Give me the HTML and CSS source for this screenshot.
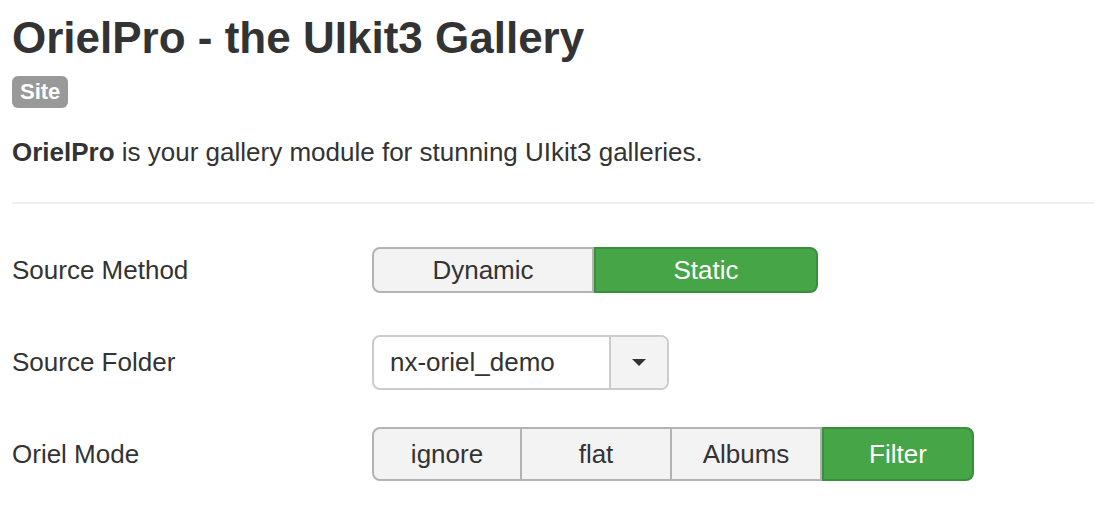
FILE: index.html
```html
<!DOCTYPE html>
<html>
<head>
<meta charset="utf-8">
<link rel="stylesheet" href="styles.css">
</head>
<body>
<div class="page">
  <h1 class="title">OrielPro - the UIkit3 Gallery</h1>
  <span class="badge">Site</span>
  <p class="desc"><strong>OrielPro</strong> is your gallery module for stunning UIkit3 galleries.</p>
  <hr class="sep">
  <div class="form">
    <div class="row">
      <div class="label">Source Method</div>
      <div class="btn-group btn-group-sm">
        <span class="btn btn-wide">Dynamic</span>
        <span class="btn btn-wide active">Static</span>
      </div>
    </div>
    <div class="row">
      <div class="label">Source Folder</div>
      <div class="select">
        <span class="select-value">nx-oriel_demo</span>
        <span class="select-arrow"><span class="caret"></span></span>
      </div>
    </div>
    <div class="row">
      <div class="label">Oriel Mode</div>
      <div class="btn-group">
        <span class="btn">ignore</span>
        <span class="btn">flat</span>
        <span class="btn">Albums</span>
        <span class="btn active">Filter</span>
      </div>
    </div>
  </div>
</div>
</body>
</html>
```

FILE: styles.css
```css
html, body {
  margin: 0;
  padding: 0;
  background: #fff;
}
body {
  font-family: "Liberation Sans", Arial, sans-serif;
  color: #333;
  font-size: 26px;
}
.page {
  padding: 14px 0 0 12px;
}
.title {
  margin: 0;
  font-size: 44px;
  line-height: 48px;
  font-weight: bold;
  color: #333;
}
.badge {
  display: inline-block;
  margin-top: 14px;
  background: #999;
  color: #fff;
  font-weight: bold;
  font-size: 22px;
  line-height: 24px;
  padding: 4px 8px;
  border-radius: 6px;
}
.desc {
  margin: 26px 0 0 0;
  line-height: 36px;
}
.desc strong {
  font-weight: bold;
}
.sep {
  margin: 32px 0 0 0;
  border: 0;
  border-top: 2px solid #eee;
  height: 0;
}
.form {
  margin-top: 38px;
}
.row {
  display: flex;
  align-items: center;
  height: 56px;
  margin-bottom: 36px;
}
.label {
  width: 360px;
  line-height: 36px;
}
.btn-group {
  display: flex;
  height: 54px;
}
.btn-group-sm {
  height: 46px;
}
.btn {
  box-sizing: border-box;
  width: 150px;
  display: flex;
  align-items: center;
  justify-content: center;
  background: #f3f3f3;
  border: 2px solid #b3b3b3;
  border-left-width: 0;
  color: #333;
}
.btn:last-child {
  width: 152px;
}
.btn-wide {
  width: 222px;
}
.btn-wide:last-child {
  width: 224px;
}
.btn:first-child {
  border-left-width: 2px;
  border-radius: 8px 0 0 8px;
}
.btn:last-child {
  border-radius: 0 8px 8px 0;
}
.btn.active {
  background: #46a546;
  border-color: #3b8e3b;
  border-left-width: 2px;
  color: #fff;
}
.select {
  box-sizing: border-box;
  display: flex;
  width: 297px;
  height: 55px;
  border: 2px solid #ccc;
  border-radius: 8px;
  background: #fff;
  overflow: hidden;
}
.select-value {
  flex: 1;
  display: flex;
  align-items: center;
  padding-left: 16px;
  color: #333;
}
.select-arrow {
  width: 56px;
  border-left: 2px solid #ccc;
  background: #f3f3f3;
  display: flex;
  align-items: center;
  justify-content: center;
}
.caret {
  width: 0;
  height: 0;
  border-left: 7px solid transparent;
  border-right: 7px solid transparent;
  border-top: 7px solid #333;
}
```
